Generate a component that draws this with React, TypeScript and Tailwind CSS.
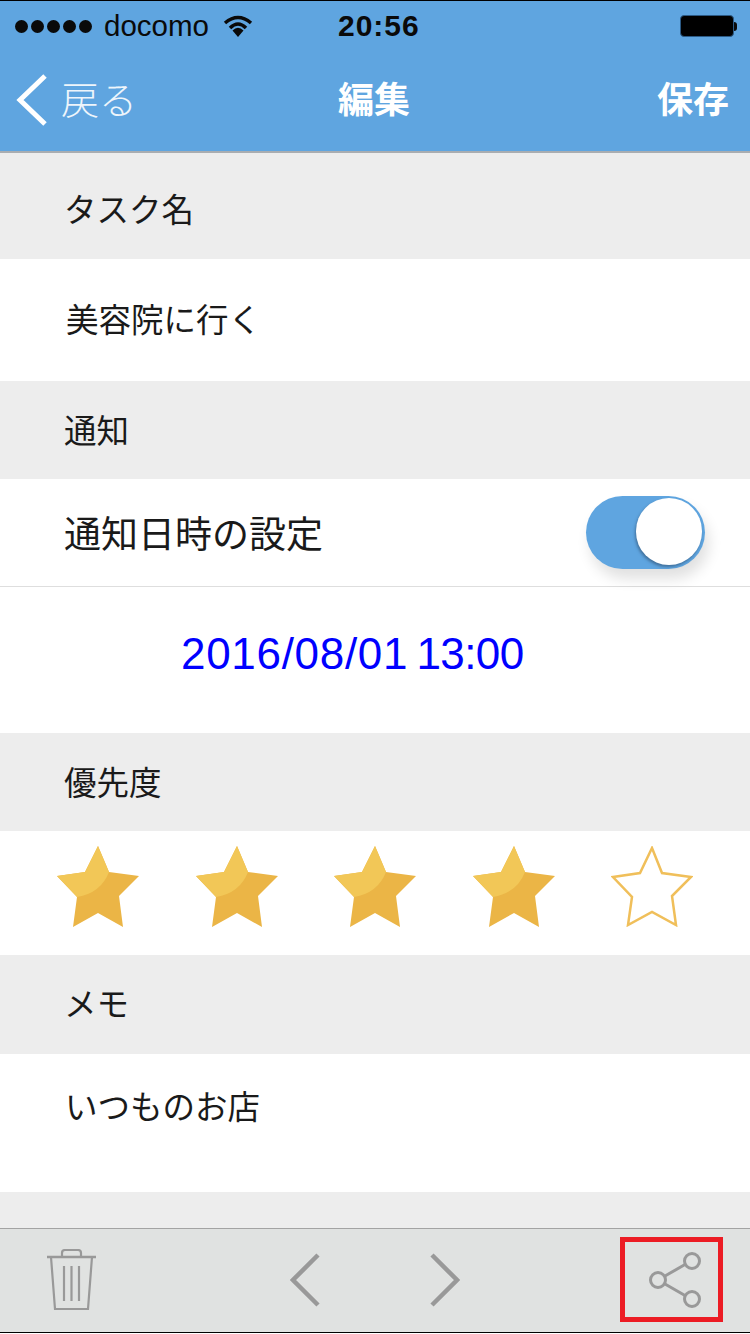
const font = 'font-["Liberation_Sans","Noto_Sans_CJK_JP",sans-serif]'

function Star({ filled }: { filled: boolean }) {
  const points = '41,0 52,26 82,30 62,50 66,81 41,67 16,81 20,51 0,30 28,26'
  if (!filled) {
    return (
      <svg width="82" height="81" viewBox="0 0 82 81">
        <polygon points="41,2 51,27 80,31 61,50 65,79 41,66 17,79 21,51 2,31 29,27" fill="none" stroke="#f0bf5a" strokeWidth="2.5" />
      </svg>
    )
  }
  return (
    <svg width="82" height="81" viewBox="0 0 82 81">
      <polygon points={points} fill="#ebb546" />
      <path d="M41 0 L28 26 L0 30 L20 51 Q44 47 52 26 Z" fill="#f2c757" />
    </svg>
  )
}

function SectionLabel({ text, size }: { text: string; size: string }) {
  return (
    <div className={`flex items-center bg-[#ededed] pl-[64px] text-[32.5px] text-[#1a1a1a] ${size}`}>
      {text}
    </div>
  )
}

function StatusBar() {
  return (
    <div className="relative flex h-[50px] items-center pl-[15px] pr-[13px] text-[#0a0a0a]">
      <div className="flex gap-[3px]">
        {[0, 1, 2, 3, 4].map(i => (
          <span key={i} className="h-[13px] w-[13px] rounded-full bg-[#0a0a0a]" />
        ))}
      </div>
      <span className="ml-[12px] text-[29.5px] leading-none">docomo</span>
      <svg className="ml-[14px]" width="30" height="22" viewBox="0 0 30 22">
        <path d="M2 8 Q15 -3 28 8" fill="none" stroke="#0a0a0a" strokeWidth="3.5" />
        <path d="M7 13 Q15 5 23 13" fill="none" stroke="#0a0a0a" strokeWidth="3.5" />
        <path d="M9.5 15.5 Q15 10 20.5 15.5 L15 22 Z" fill="#0a0a0a" />
      </svg>
      <span className="absolute left-[338px] text-[30px] font-bold leading-none tracking-[1px]">20:56</span>
      <div className="ml-auto flex items-center">
        <div className="h-[22px] w-[54px] rounded-[4px] border border-[#2c5a85] bg-black" />
        <div className="h-[9px] w-[3px] rounded-r-full bg-[#0a0a0a]" />
      </div>
    </div>
  )
}

function NavBar() {
  return (
    <div className="relative flex h-[100px] items-center text-white">
      <svg className="ml-[15px] mb-[2px]" width="34" height="54" viewBox="0 0 34 54">
        <path d="M30 3 L5 27 L30 51" fill="none" stroke="#fff" strokeWidth="5" />
      </svg>
      <span className="ml-[12px] text-[38px] font-light text-[#eef5fb]">戻る</span>
      <span className="absolute left-[338px] text-[36px] font-bold">編集</span>
      <span className="ml-auto mr-[21px] text-[36px] font-bold">保存</span>
    </div>
  )
}

function Toggle() {
  return (
    <div className="relative h-[73px] w-[119px] rounded-full bg-[#5fa5e0] shadow-[4px_10px_14px_rgba(0,0,0,0.12)]">
      <div className="absolute right-[3px] top-[2px] h-[67px] w-[66px] rounded-full bg-white shadow-[-1px_2px_3px_rgba(40,70,100,0.55)]" />
    </div>
  )
}

function Toolbar() {
  return (
    <div className="flex h-[104px] items-center border-t border-[#a3a3a3] bg-[#e0e2e1] pb-[2px] pl-[47px]">
      <svg width="49" height="62" viewBox="0 0 49 62" fill="none" stroke="#999" strokeWidth="2.2">
        <path d="M0 8 H49" strokeWidth="2.5" />
        <path d="M15 8 V4 Q15 1 18 1 H31 Q34 1 34 4 V8" />
        <path d="M4 8 L8 60 H41 L45 8" />
        <path d="M17 17 V52 M24.5 17 V52 M32 17 V52" />
      </svg>
      <svg className="ml-[194px]" width="30" height="54" viewBox="0 0 30 54" fill="none" stroke="#999" strokeWidth="4.5">
        <path d="M28 2 L3 27 L28 52" />
      </svg>
      <svg className="ml-[110px]" width="30" height="54" viewBox="0 0 30 54" fill="none" stroke="#999" strokeWidth="4.5">
        <path d="M2 2 L27 27 L2 52" />
      </svg>
      <div className="ml-[160px] flex h-[85px] w-[103px] items-center justify-center border-[5px] border-[#ec1c24] pl-[8px]">
        <svg width="54" height="58" viewBox="0 0 54 58" fill="none" stroke="#999" strokeWidth="3">
          <circle cx="9" cy="29" r="7.5" />
          <circle cx="43" cy="10" r="7.5" />
          <circle cx="43" cy="48" r="7.5" />
          <path d="M16 25 L36 13.5 M16 33 L36 44.5" />
        </svg>
      </div>
    </div>
  )
}

export default function App() {
  return (
    <div className={`flex h-[1334px] w-[750px] flex-col overflow-hidden bg-white ${font}`}>
      <div className="h-px bg-black" />
      <div className="bg-[#5fa5e0]">
        <StatusBar />
        <NavBar />
      </div>
      <div className="h-[2px] bg-[#a9adb1]" />

      <SectionLabel text="タスク名" size="h-[106px] pt-[10px]" />
      <div className="flex h-[122px] items-center pl-[66px] pt-[2px] text-[32.5px] text-[#1a1a1a]">美容院に行く</div>

      <SectionLabel text="通知" size="h-[98px] pt-[4px]" />
      <div className="flex h-[108px] items-center justify-between border-b border-[#dedede] pl-[64px] pr-[45px]">
        <span className="pt-[6px] text-[37px] leading-none text-[#1a1a1a]">通知日時の設定</span>
        <Toggle />
      </div>
      <div className="flex h-[146px] items-center pb-[13px] pl-[181px] text-[44px] text-[#0000ff]">
        <span>
          <span className="tracking-[0.7px]">2016/08/01</span>{' '}
          <span className="ml-[-4px] tracking-[-0.6px]">13:00</span>
        </span>
      </div>

      <SectionLabel text="優先度" size="h-[98px] pt-[4px]" />
      <div className="flex h-[124px] items-center justify-between px-[57px] pb-[13px]">
        <Star filled />
        <Star filled />
        <Star filled />
        <Star filled />
        <Star filled={false} />
      </div>

      <SectionLabel text="メモ" size="h-[99px] pt-[2px]" />
      <div className="h-[138px] pl-[65px] pt-[38px] text-[32.5px] leading-none text-[#1a1a1a]">いつものお店</div>
      <div className="h-[36px] bg-[#ededed]" />

      <Toolbar />
      <div className="h-px bg-black" />
    </div>
  )
}
